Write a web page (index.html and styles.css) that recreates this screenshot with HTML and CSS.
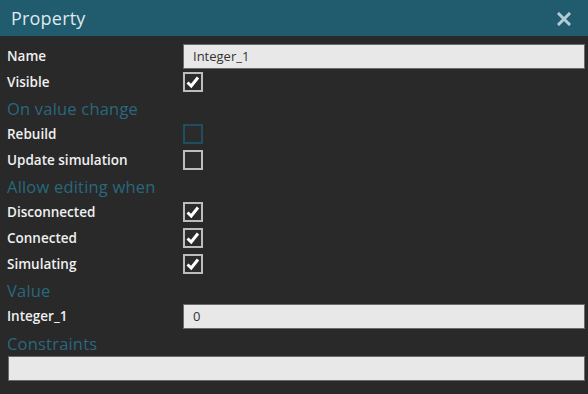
FILE: index.html
```html
<!DOCTYPE html>
<html>
<head>
<meta charset="utf-8">
<link rel="stylesheet" href="styles.css">
</head>
<body>
<div class="window">
  <div class="titlebar">
    <span class="title">Property</span>
    <svg class="close" width="14" height="14" viewBox="0 0 14 14"><path d="M2 2 L12 12 M12 2 L2 12" stroke="#b3ccd5" stroke-width="3" stroke-linecap="square"/></svg>
  </div>
  <div class="content">
    <div class="row"><span class="label">Name</span><div class="input">Integer_1</div></div>
    <div class="row"><span class="label">Visible</span><span class="cb checked"><svg viewBox="0 0 20 20"><path d="M4.5 10.5 L8.2 14 L15 5.5" fill="none" stroke="#fff" stroke-width="3"/></svg></span></div>
    <div class="row head">On value change</div>
    <div class="row"><span class="label">Rebuild</span><span class="cb teal"></span></div>
    <div class="row"><span class="label">Update simulation</span><span class="cb"></span></div>
    <div class="row head">Allow editing when</div>
    <div class="row"><span class="label">Disconnected</span><span class="cb checked"><svg viewBox="0 0 20 20"><path d="M4.5 10.5 L8.2 14 L15 5.5" fill="none" stroke="#fff" stroke-width="3"/></svg></span></div>
    <div class="row"><span class="label">Connected</span><span class="cb checked"><svg viewBox="0 0 20 20"><path d="M4.5 10.5 L8.2 14 L15 5.5" fill="none" stroke="#fff" stroke-width="3"/></svg></span></div>
    <div class="row"><span class="label">Simulating</span><span class="cb checked"><svg viewBox="0 0 20 20"><path d="M4.5 10.5 L8.2 14 L15 5.5" fill="none" stroke="#fff" stroke-width="3"/></svg></span></div>
    <div class="row head">Value</div>
    <div class="row"><span class="label">Integer_1</span><div class="input">0</div></div>
    <div class="row head constraints">Constraints</div>
    <div class="input wide"></div>
  </div>
</div>
</body>
</html>
```
FILE: styles.css
```css
html, body {
  margin: 0;
  padding: 0;
  background: #292929;
}
.window {
  width: 588px;
  height: 394px;
  background: #292929;
  font-family: "Open Sans", "Noto Sans", sans-serif;
  overflow: hidden;
}
.titlebar {
  height: 36px;
  background: #215b6e;
  display: flex;
  align-items: center;
  justify-content: space-between;
  padding: 0 17px 0 11px;
  box-sizing: border-box;
}
.title {
  color: #dde9ee;
  font-size: 18px;
  letter-spacing: 0.2px;
}
.close {
  display: block;
  margin-top: 1px;
}
.content {
  padding: 7px 3px 0 7px;
}
.row {
  height: 26px;
  display: flex;
  align-items: center;
}
.label {
  width: 176px;
  color: #f0f0f0;
  font-size: 13.5px;
  font-weight: 600;
  flex: none;
}
.head {
  color: #28687e;
  font-size: 16.5px;
  font-weight: 400;
  letter-spacing: 0.2px;
}
.constraints {
  padding-top: 3px;
  box-sizing: border-box;
}
.input {
  flex: 1;
  height: 25px;
  box-sizing: border-box;
  background: #e8e8e8;
  border: 1px solid #6b6b6b;
  color: #333;
  font-size: 13px;
  padding-left: 9px;
  display: flex;
  align-items: center;
}
.input.wide {
  margin-top: 1px;
  margin-left: 1px;
}
.cb {
  width: 20px;
  height: 20px;
  box-sizing: border-box;
  border: 2px solid #bdbdbd;
  background: #2b2b2b;
  display: block;
  position: relative;
}
.cb svg {
  position: absolute;
  left: -2px;
  top: -2px;
  width: 20px;
  height: 20px;
}
.cb.teal {
  border-color: #1d4f61;
}
```
